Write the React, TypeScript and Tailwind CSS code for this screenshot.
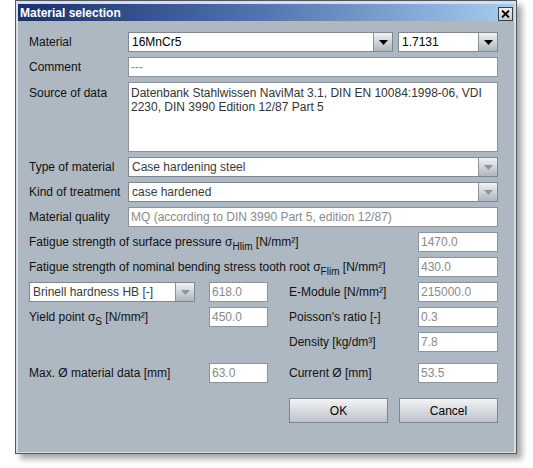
import { FC, ReactNode } from "react";

const Arrow: FC<{ disabled?: boolean }> = ({ disabled }) => (
  <div className="w-[19px] h-full shrink-0 border-l border-[#8a939c] bg-gradient-to-b from-[#f1f3f5] to-[#aeb6be] flex items-center justify-center">
    <svg width="9" height="5" viewBox="0 0 9 5">
      <path d="M0 0h9L4.5 5z" fill={disabled ? "#8d949b" : "#000"} />
    </svg>
  </div>
);

const Combo: FC<{ value: string; disabled?: boolean; className?: string }> = ({
  value,
  disabled,
  className,
}) => (
  <div
    className={`h-[20px] flex bg-white border border-[#7f8891] ${className ?? ""}`}
  >
    <div
      className={`flex-1 pl-[3px] leading-[18px] whitespace-nowrap overflow-hidden ${
        disabled ? "text-[#3a3a3a]" : "text-black"
      }`}
    >
      {value}
    </div>
    <Arrow disabled={disabled} />
  </div>
);

const Field: FC<{ value: string; dim?: boolean; className?: string }> = ({
  value,
  dim = true,
  className,
}) => (
  <div
    className={`h-[20px] bg-white border border-[#8b949d] pl-[2px] leading-[18px] whitespace-nowrap overflow-hidden ${
      dim ? "text-[#8a8a8a]" : "text-black"
    } ${className ?? ""}`}
  >
    {value}
  </div>
);

const Row: FC<{ label: ReactNode; children: ReactNode }> = ({ label, children }) => (
  <div className="flex items-center h-[20px]">
    <div className="w-[99px] shrink-0 whitespace-nowrap">{label}</div>
    <div className="flex-1 flex gap-[5px]">{children}</div>
  </div>
);

const Sub: FC<{ children: ReactNode }> = ({ children }) => (
  <sub className="text-[10px] bottom-[-4px]">{children}</sub>
);

const Button: FC<{ label: string }> = ({ label }) => (
  <button className="w-[99px] h-[25px] border border-[#7c8590] bg-gradient-to-b from-[#f2f4f6] to-[#bcc3ca] text-black">
    {label}
  </button>
);

export default function App() {
  return (
    <div className="w-[533px] h-[468px] bg-white font-['Liberation_Sans',Arial,sans-serif] text-[12px] text-[#111]">
      <div className="ml-[15px] w-[502px] h-[454px] border border-[#4f5862] bg-[#d9dee3] px-[2px] pt-[3px] pb-[1px] flex flex-col shadow-[5px_5px_6px_rgba(0,0,0,0.35)]">
        {/* title bar */}
        <div className="h-[17px] shrink-0 flex items-center justify-between pl-[2px] pr-[1px] bg-gradient-to-r from-[#19306c] via-[#5476ae] to-[#a9ccf0]">
          <span className="text-white font-bold text-[12px] leading-none">Material selection</span>
          <div className="w-[15px] h-[14px] mt-[2px] border border-[#3b3f44] bg-gradient-to-b from-[#eceef0] to-[#c3c9cf] flex items-center justify-center">
            <svg width="9" height="8" viewBox="0 0 9 8">
              <path d="M1 0.5L8 7.5M8 0.5L1 7.5" stroke="#000" strokeWidth="1.8" />
            </svg>
          </div>
        </div>

        {/* body */}
        <div className="flex-1 bg-[#aeb8c2] pl-[11px] pr-[16px] pt-[11px] flex flex-col">
          <div className="flex flex-col gap-[5px]">
            <Row label="Material">
              <Combo value="16MnCr5" className="w-[265px]" />
              <Combo value="1.7131" className="flex-1" />
            </Row>
            <Row label="Comment">
              <Field value="---" className="flex-1" />
            </Row>
            <div className="flex h-[70px]">
              <div className="w-[99px] shrink-0 pt-[4px] leading-[14px]">Source of data</div>
              <div className="flex-1 bg-white border border-[#8b949d] pl-[2px] pt-[3px] leading-[14px] text-[#333]">
                Datenbank Stahlwissen NaviMat 3.1, DIN EN 10084:1998-06, VDI
                <br />
                2230, DIN 3990 Edition 12/87 Part 5
              </div>
            </div>
            <Row label="Type of material">
              <Combo value="Case hardening steel" disabled className="flex-1" />
            </Row>
            <Row label="Kind of treatment">
              <Combo value="case hardened" disabled className="flex-1" />
            </Row>
            <Row label="Material quality">
              <Field value="MQ (according to DIN 3990 Part 5, edition 12/87)" className="flex-1" />
            </Row>
            <div className="flex items-center h-[20px]">
              <div className="flex-1 whitespace-nowrap">
                Fatigue strength of surface pressure σ<Sub>Hlim</Sub> [N/mm²]
              </div>
              <Field value="1470.0" className="w-[80px]" />
            </div>
            <div className="flex items-center h-[20px]">
              <div className="flex-1 whitespace-nowrap">
                Fatigue strength of nominal bending stress tooth root σ<Sub>Flim</Sub> [N/mm²]
              </div>
              <Field value="430.0" className="w-[80px]" />
            </div>

            {/* two columns */}
            <div className="flex items-center h-[20px]">
              <Combo value="Brinell hardness HB [-]" disabled className="w-[166px]" />
              <div className="w-[14px]" />
              <Field value="618.0" className="w-[59px]" />
              <div className="w-[21px]" />
              <div className="flex-1 whitespace-nowrap">E-Module [N/mm²]</div>
              <Field value="215000.0" className="w-[80px]" />
            </div>
            <div className="flex items-center h-[20px]">
              <div className="w-[180px] whitespace-nowrap">
                Yield point σ<Sub>S</Sub> [N/mm²]
              </div>
              <Field value="450.0" className="w-[59px]" />
              <div className="w-[21px]" />
              <div className="flex-1 whitespace-nowrap">Poisson's ratio [-]</div>
              <Field value="0.3" className="w-[80px]" />
            </div>
            <div className="flex items-center h-[20px]">
              <div className="w-[260px]" />
              <div className="flex-1 whitespace-nowrap">Density [kg/dm³]</div>
              <Field value="7.8" className="w-[80px]" />
            </div>
          </div>

          <div className="flex items-center h-[20px] mt-[11px]">
            <div className="w-[180px] whitespace-nowrap">Max. Ø material data [mm]</div>
            <Field value="63.0" className="w-[59px]" />
            <div className="w-[21px]" />
            <div className="flex-1 whitespace-nowrap">Current Ø [mm]</div>
            <Field value="53.5" className="w-[80px]" />
          </div>

          <div className="flex justify-end gap-[11px] mt-[15px]">
            <Button label="OK" />
            <Button label="Cancel" />
          </div>
        </div>
      </div>
    </div>
  );
}
